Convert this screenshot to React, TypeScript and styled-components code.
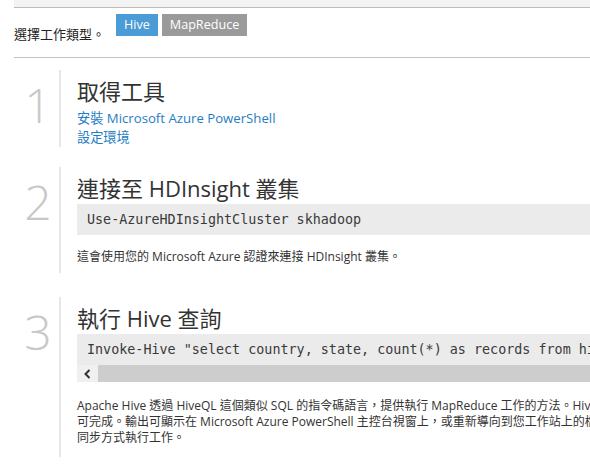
import React from "react";
import styled, { createGlobalStyle } from "styled-components";

const GlobalStyle = createGlobalStyle`
  html, body { margin: 0; padding: 0; background: #fff; overflow: hidden; }
  body {
    font-family: "Open Sans", "Noto Sans CJK TC", sans-serif;
    color: #333;
  }
`;

const Page = styled.div`
  width: 820px;
  padding-left: 14px;
`;

const TopBand = styled.div`
  height: 8px;
  box-sizing: border-box;
  background: #f3f3f3;
  border-bottom: 1px solid #bcbcbc;
`;

const TypeRow = styled.div`
  display: flex;
  align-items: flex-start;
  height: 50px;
  box-sizing: border-box;
  padding-top: 6px;
  border-bottom: 1px solid #c4c4c4;
`;

const TypeLabel = styled.span`
  width: 102px;
  margin-top: 11px;
  font-size: 13px;
  line-height: 18px;
  color: #222;
`;

const TypeButtons = styled.div`
  display: flex;
  gap: 4px;
`;

const TypeButton = styled.span<{ $active?: boolean }>`
  display: inline-block;
  height: 22px;
  line-height: 22px;
  padding: 0 8px;
  font-size: 12.6px;
  color: #fff;
  background: ${(p) => (p.$active ? "#4b9bd6" : "#9a9a9a")};
`;

const Steps = styled.div`
  display: flex;
  flex-direction: column;
`;

const Step = styled.section<{ $top: number }>`
  display: flex;
  margin-top: ${(p) => p.$top}px;
`;

const StepNumber = styled.div`
  width: 48px;
  text-align: center;
  font-size: 48px;
  font-weight: 300;
  line-height: 1;
  color: #c8c8c8;
  padding-top: 11px;
`;

const StepBody = styled.div<{ $pb: number }>`
  flex: 1;
  border-left: 2px solid #e6e6e6;
  padding: 7px 0 ${(p) => p.$pb}px 16px;
  min-width: 0;
  margin-left: -3px;
`;

const StepTitle = styled.h2`
  margin: 0;
  font-size: 22px;
  font-weight: 400;
  line-height: 28px;
  color: #333;
`;

const LinkList = styled.div`
  display: flex;
  flex-direction: column;
  margin-top: 4px;
`;

const StepLink = styled.a`
  font-size: 13.2px;
  line-height: 19px;
  color: #1f7ec4;
  text-decoration: none;
`;

const CodeBox = styled.pre`
  margin: 2px 0 0;
  background: #ebebeb;
  padding: 0 10px;
  font-family: "DejaVu Sans Mono", "Liberation Mono", monospace;
  font-size: 13.4px;
  line-height: 31px;
  color: #3a3a3a;
  white-space: pre;
  overflow: hidden;
`;

const ScrollBar = styled.div`
  display: flex;
  height: 17px;
  background: #f0f0f0;
`;

const ScrollArrow = styled.div`
  width: 21px;
  display: flex;
  align-items: center;
  justify-content: center;
`;

const ScrollThumb = styled.div`
  flex: 1;
  background: #cdcdcd;
`;

const Desc = styled.p<{ $mt: number }>`
  margin: ${(p) => p.$mt}px 0 0;
  font-size: 12px;
  line-height: 16px;
  color: #333;
  white-space: nowrap;
`;

export default function App() {
  return (
    <>
      <GlobalStyle />
      <Page>
        <TopBand />
        <TypeRow>
          <TypeLabel>選擇工作類型。</TypeLabel>
          <TypeButtons>
            <TypeButton $active>Hive</TypeButton>
            <TypeButton>MapReduce</TypeButton>
          </TypeButtons>
        </TypeRow>
        <Steps>
          <Step $top={12}>
            <StepNumber>1</StepNumber>
            <StepBody $pb={0}>
              <StepTitle>取得工具</StepTitle>
              <LinkList>
                <StepLink href="#">安裝 Microsoft Azure PowerShell</StepLink>
                <StepLink href="#">設定環境</StepLink>
              </LinkList>
            </StepBody>
          </Step>
          <Step $top={20}>
            <StepNumber>2</StepNumber>
            <StepBody $pb={8}>
              <StepTitle>連接至 HDInsight 叢集</StepTitle>
              <CodeBox>Use-AzureHDInsightCluster skhadoop</CodeBox>
              <Desc $mt={14}>這會使用您的 Microsoft Azure 認證來連接 HDInsight 叢集。</Desc>
            </StepBody>
          </Step>
          <Step $top={24}>
            <StepNumber>3</StepNumber>
            <StepBody $pb={11}>
              <StepTitle>執行 Hive 查詢</StepTitle>
              <CodeBox>Invoke-Hive "select country, state, count(*) as records from hivesampletable group by country, state order by records desc limit 5"</CodeBox>
              <ScrollBar>
                <ScrollArrow>
                  <svg width="7" height="10" viewBox="0 0 7 10">
                    <path d="M5.5 1 L1.5 5 L5.5 9" fill="none" stroke="#333" strokeWidth="2" />
                  </svg>
                </ScrollArrow>
                <ScrollThumb />
              </ScrollBar>
              <Desc $mt={16}>
                Apache Hive 透過 HiveQL 這個類似 SQL 的指令碼語言，提供執行 MapReduce 工作的方法。HiveQL 查詢使用 Invoke-Hive 指令程式即
                <br />
                可完成。輸出可顯示在 Microsoft Azure PowerShell 主控台視窗上，或重新導向到您工作站上的檔案。Invoke-Hive 會以
                <br />
                同步方式執行工作。
              </Desc>
            </StepBody>
          </Step>
        </Steps>
      </Page>
    </>
  );
}
